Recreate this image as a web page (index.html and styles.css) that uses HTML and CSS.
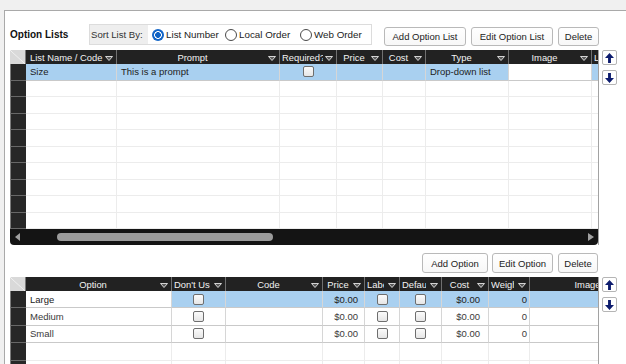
FILE: index.html
```html
<!DOCTYPE html>
<html>
<head>
<meta charset="utf-8">
<title>Option Lists</title>
<link rel="stylesheet" href="styles.css">
</head>
<body>
<svg class="defs" aria-hidden="true">
  <symbol id="flt" viewBox="0 0 8 5"><path d="M0.5 0.5H7.5L4 4.5Z" fill="#5a5a5a" stroke="#d4d4d4" stroke-width="1" stroke-linejoin="round"/></symbol>
  <symbol id="up" viewBox="0 0 10 11"><path d="M5 0L10 5.5H6.6V11H3.4V5.5H0Z" fill="#0d1c6e"/></symbol>
  <symbol id="dn" viewBox="0 0 10 11"><path d="M5 11L10 5.5H6.6V0H3.4V5.5H0Z" fill="#0d1c6e"/></symbol>
</svg>
<div class="panel">
  <div class="toolbar">
    <div class="title">Option Lists</div>
    <div class="sortbox">
      <div class="sortlabel">Sort List By:</div>
      <label class="radio on w1"><span class="rd"></span>List Number</label>
      <label class="radio w2"><span class="rd"></span>Local Order</label>
      <label class="radio"><span class="rd"></span>Web Order</label>
    </div>
    <div class="tbtns">
      <button class="btn b-aol">Add Option List</button>
      <button class="btn b-eol">Edit Option List</button>
      <button class="btn b-del">Delete</button>
    </div>
  </div>

  <div class="gridrow g-top">
    <div class="grid g1">
      <div class="r hr">
        <div class="corner"></div>
        <div class="h l"><span>List Name / Code</span><svg class="f"><use href="#flt"/></svg></div>
        <div class="h"><span>Prompt</span><svg class="f"><use href="#flt"/></svg></div>
        <div class="h l"><span>Required?</span><svg class="f"><use href="#flt"/></svg></div>
        <div class="h"><span>Price</span><svg class="f"><use href="#flt"/></svg></div>
        <div class="h"><span>Cost</span><svg class="f"><use href="#flt"/></svg></div>
        <div class="h"><span>Type</span><svg class="f"><use href="#flt"/></svg></div>
        <div class="h"><span>Image</span><svg class="f"><use href="#flt"/></svg></div>
        <div class="h l"><span>Link</span><svg class="f"><use href="#flt"/></svg></div>
      </div>
      <div class="r dr sel">
        <div class="rh"></div>
        <div class="c">Size</div><div class="c">This is a prompt</div><div class="c cc"><i class="cb"></i></div><div class="c"></div><div class="c"></div><div class="c">Drop-down list</div><div class="c wh"></div><div class="c"></div>
      </div>
      <div class="r"><div class="rh"></div><div class="c"></div><div class="c"></div><div class="c"></div><div class="c"></div><div class="c"></div><div class="c"></div><div class="c"></div><div class="c"></div></div>
      <div class="r"><div class="rh"></div><div class="c"></div><div class="c"></div><div class="c"></div><div class="c"></div><div class="c"></div><div class="c"></div><div class="c"></div><div class="c"></div></div>
      <div class="r"><div class="rh"></div><div class="c"></div><div class="c"></div><div class="c"></div><div class="c"></div><div class="c"></div><div class="c"></div><div class="c"></div><div class="c"></div></div>
      <div class="r"><div class="rh"></div><div class="c"></div><div class="c"></div><div class="c"></div><div class="c"></div><div class="c"></div><div class="c"></div><div class="c"></div><div class="c"></div></div>
      <div class="r"><div class="rh"></div><div class="c"></div><div class="c"></div><div class="c"></div><div class="c"></div><div class="c"></div><div class="c"></div><div class="c"></div><div class="c"></div></div>
      <div class="r"><div class="rh"></div><div class="c"></div><div class="c"></div><div class="c"></div><div class="c"></div><div class="c"></div><div class="c"></div><div class="c"></div><div class="c"></div></div>
      <div class="r"><div class="rh"></div><div class="c"></div><div class="c"></div><div class="c"></div><div class="c"></div><div class="c"></div><div class="c"></div><div class="c"></div><div class="c"></div></div>
      <div class="r"><div class="rh"></div><div class="c"></div><div class="c"></div><div class="c"></div><div class="c"></div><div class="c"></div><div class="c"></div><div class="c"></div><div class="c"></div></div>
      <div class="r"><div class="rh"></div><div class="c"></div><div class="c"></div><div class="c"></div><div class="c"></div><div class="c"></div><div class="c"></div><div class="c"></div><div class="c"></div></div>
      <div class="hscroll">
        <span class="sa-l"></span>
        <span class="thumb"></span>
        <span class="sa-r"></span>
      </div>
    </div>
    <div class="arrows">
      <button class="arr"><svg><use href="#up"/></svg></button>
      <button class="arr"><svg><use href="#dn"/></svg></button>
    </div>
  </div>

  <div class="btnrow">
    <button class="btn b-ao">Add Option</button>
    <button class="btn b-eo">Edit Option</button>
    <button class="btn b-d2">Delete</button>
  </div>

  <div class="gridrow">
    <div class="grid g2">
      <div class="r hr">
        <div class="corner"></div>
        <div class="h"><span>Option</span><svg class="f"><use href="#flt"/></svg></div>
        <div class="h l"><span>Don't Use</span><svg class="f"><use href="#flt"/></svg></div>
        <div class="h"><span>Code</span><svg class="f"><use href="#flt"/></svg></div>
        <div class="h"><span>Price</span><svg class="f"><use href="#flt"/></svg></div>
        <div class="h l"><span>Label</span><svg class="f"><use href="#flt"/></svg></div>
        <div class="h l"><span>Default</span><svg class="f"><use href="#flt"/></svg></div>
        <div class="h"><span>Cost</span><svg class="f"><use href="#flt"/></svg></div>
        <div class="h l"><span>Weight</span><svg class="f"><use href="#flt"/></svg></div>
        <div class="h"><span>Image</span><svg class="f"><use href="#flt"/></svg></div>
      </div>
      <div class="r dr sel">
        <div class="rh"></div>
        <div class="c wh">Large</div><div class="c cc"><i class="cb"></i></div><div class="c"></div><div class="c rt p6">$0.00</div><div class="c cc"><i class="cb"></i></div><div class="c cc"><i class="cb"></i></div><div class="c rt p8">$0.00</div><div class="c rt p2">0</div><div class="c"></div>
      </div>
      <div class="r dr">
        <div class="rh"></div>
        <div class="c">Medium</div><div class="c cc"><i class="cb"></i></div><div class="c"></div><div class="c rt p6">$0.00</div><div class="c cc"><i class="cb"></i></div><div class="c cc"><i class="cb"></i></div><div class="c rt p8">$0.00</div><div class="c rt p2">0</div><div class="c"></div>
      </div>
      <div class="r dr">
        <div class="rh"></div>
        <div class="c">Small</div><div class="c cc"><i class="cb"></i></div><div class="c"></div><div class="c rt p6">$0.00</div><div class="c cc"><i class="cb"></i></div><div class="c cc"><i class="cb"></i></div><div class="c rt p8">$0.00</div><div class="c rt p2">0</div><div class="c"></div>
      </div>
      <div class="r"><div class="rh"></div><div class="c"></div><div class="c"></div><div class="c"></div><div class="c"></div><div class="c"></div><div class="c"></div><div class="c"></div><div class="c"></div><div class="c"></div></div>
      <div class="r"><div class="rh"></div><div class="c"></div><div class="c"></div><div class="c"></div><div class="c"></div><div class="c"></div><div class="c"></div><div class="c"></div><div class="c"></div><div class="c"></div></div>
    </div>
    <div class="arrows">
      <button class="arr"><svg><use href="#up"/></svg></button>
      <button class="arr"><svg><use href="#dn"/></svg></button>
    </div>
  </div>
</div>
</body>
</html>
```

FILE: styles.css
```css
* { box-sizing: border-box; }
html, body { margin: 0; height: 100%; }
body {
  background: #f0f0f0;
  font-family: "Liberation Sans", Arial, sans-serif;
  font-size: 9.5px;
  color: #222;
  overflow: hidden;
}
.defs { position: absolute; width: 0; height: 0; overflow: hidden; }

.panel {
  margin: 10px 0 0 4px;
  height: calc(100% - 10px);
  background: #fff;
  border-top: 1px solid #a9a9a9;
  border-left: 1px solid #a9a9a9;
  padding: 13px 0 0 5px;
}

/* top toolbar */
.toolbar { display: flex; align-items: flex-start; height: 22px; }
.title { width: 79px; font-size: 10px; font-weight: bold; color: #111; line-height: 22px; }
.sortbox {
  width: 283px; height: 21px;
  border: 1px solid #dcdcdc;
  display: flex; align-items: center;
  background: #fff;
}
.sortlabel {
  width: 58px; height: 100%;
  background: #eeeeee;
  padding-left: 1px;
  line-height: 19px;
  color: #333;
  font-size: 9.6px;
}
.radio { display: flex; align-items: center; font-size: 9.8px; color: #222; }
.radio:first-of-type { margin-left: 4px; }
.w1 { width: 73px; }
.w2 { width: 75px; }
.rd {
  width: 12px; height: 12px; border-radius: 50%;
  border: 1px solid #4a4a4a; background: #fff;
  margin-right: 2px; flex: none;
}
.on .rd {
  border: none;
  background: radial-gradient(circle, #0f62c4 0 2.6px, #fff 3.1px 3.6px, #1466c8 4.1px);
}

.btn {
  height: 19px; padding: 0;
  border: 1px solid #b9b9b9; border-radius: 3px;
  background: linear-gradient(#ffffff, #f7f7f7);
  font-family: inherit; font-size: 9.5px; color: #222;
}
.tbtns { display: flex; gap: 5px; margin: 3px 0 0 12px; }
.b-aol, .b-eol { width: 82px; }
.b-del { width: 41px; }

/* grids */
.gridrow { display: flex; align-items: flex-start; }
.g-top { margin-top: 4px; }
.grid {
  width: 589px;
  overflow: hidden;
  border-right: 1px solid #a2a2a2;
}
.r { display: grid; height: 16.5px; }
.g1 .r { grid-template-columns: 16px 91px 163px 57px 46px 43px 83px 83px 60px; }
.g2 .r { grid-template-columns: 16px 146px 54px 97px 42px 35px 42px 47px 41px 127px; height: 17.4px; }
.r.hr { height: 14px; }

.corner {
  background: linear-gradient(to top right, #d9d9d9 calc(50% - 0.6px), #f4f4f4 50%, #d9d9d9 calc(50% + 0.6px));
  border-right: 1px solid #7a7a7a;
}
.h {
  background: #222;
  color: #f2f2f2;
  border-right: 1px solid #707070;
  display: flex; align-items: center;
  padding: 0 3px 0 2px;
  overflow: hidden;
  min-width: 0;
}
.h span {
  flex: 1; min-width: 0;
  white-space: nowrap; overflow: hidden;
  text-align: center;
  font-size: 9.4px;
}
.h.l span { text-align: left; }
.g1 .h.l:nth-child(2) span { padding-left: 2px; }
.g2 .h.l span { margin-right: 2px; }
.f { width: 8px; height: 5px; flex: none; margin: 2px 0 0 2px; }

.rh {
  background: #272727;
  border-left: 1px solid #7c7c7c;
  border-bottom: 1px solid #686868;
}
.c {
  border-right: 1px solid #ececec;
  border-bottom: 1px solid #ececec;
  padding: 0 4px;
  white-space: nowrap; overflow: hidden;
  display: flex; align-items: center;
  min-width: 0;
}
.dr .c { border-bottom-color: #c9c9c9; border-right-color: #d6d6d6; }
.sel .c { background: #a9d0f0; }
.sel .c.wh { background: #fff; }
.cc { justify-content: center; }
.rt { justify-content: flex-end; }
.p6 { padding-right: 6px; }
.p8 { padding-right: 8px; }
.p2 { padding-right: 2px; }
.g2 .dr:not(.sel) .c { color: #3a3a3a; }

.cb {
  display: block;
  width: 11px; height: 11px;
  border: 1px solid #6e6e6e; border-radius: 2px;
  background: linear-gradient(#fbfbfb, #e6e6e6);
}

.hscroll {
  height: 16px;
  background: #141414;
  border-radius: 0 0 4px 4px;
  display: flex; align-items: center;
  padding: 0 4px 0 5px;
}
.sa-l {
  width: 0; height: 0;
  border-right: 5px solid #a0a0a0;
  border-top: 4px solid transparent;
  border-bottom: 4px solid transparent;
}
.thumb {
  width: 216px; height: 8px;
  margin-left: 37px;
  background: #9b9b9b;
  border-radius: 4px;
}
.sa-r {
  width: 0; height: 0;
  margin-left: auto;
  border-left: 6px solid #a0a0a0;
  border-top: 4px solid transparent;
  border-bottom: 4px solid transparent;
}

.arrows { display: flex; flex-direction: column; gap: 5px; margin-left: 3px; }
.arr {
  width: 15px; height: 15px; padding: 0;
  border: 1px solid #b5b5b5; border-radius: 2px;
  background: #fff;
  display: flex; align-items: center; justify-content: center;
}
.arr svg { width: 9px; height: 10px; }

.btnrow {
  width: 589px;
  display: flex; justify-content: flex-end;
  gap: 4px;
  margin-top: 8px;
  padding-right: 1px;
}
.btnrow .btn { height: 20px; }
.b-ao { width: 66px; }
.b-eo { width: 61px; margin-right: 1px; }
.b-d2 { width: 40px; }
.btnrow + .gridrow { margin-top: 4px; }
```
